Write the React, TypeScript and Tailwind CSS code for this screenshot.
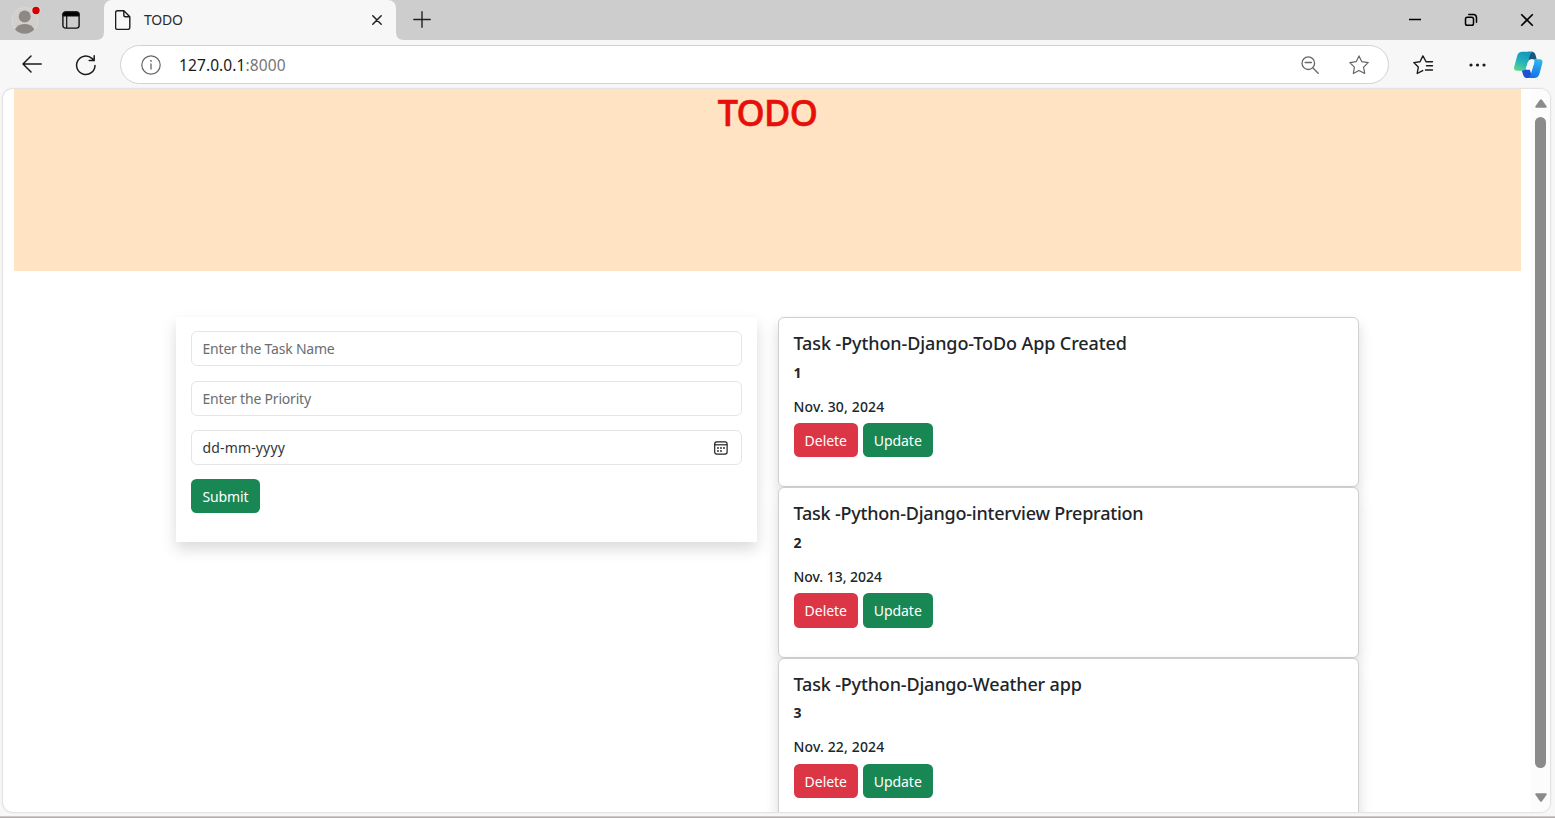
import React from "react";

type Task = { name: string; nameSpacing: string; dateSpacing: string; priority: string; date: string };

const tasks: Task[] = [
  { name: "Task -Python-Django-ToDo App Created", nameSpacing: "tracking-[-0.1px]", dateSpacing: "tracking-[0.15px]", priority: "1", date: "Nov. 30, 2024" },
  { name: "Task -Python-Django-interview Prepration", nameSpacing: "tracking-[-0.21px]", dateSpacing: "tracking-[-0.03px]", priority: "2", date: "Nov. 13, 2024" },
  { name: "Task -Python-Django-Weather app", nameSpacing: "tracking-[-0.16px]", dateSpacing: "tracking-[0.15px]", priority: "3", date: "Nov. 22, 2024" },
];

function TabStrip() {
  return (
    <div className="flex h-[40px] shrink-0 items-stretch bg-[#cdcdcd]">
      <div className="flex w-[104px] shrink-0 items-center">
        <svg className="ml-[11px] h-[34px] w-[32px]" viewBox="0 0 32 34" fill="none">
          <circle cx="14" cy="17.500" r="13" fill="#d2d0ce" stroke="#dcd9d6" />
          <circle cx="13.700" cy="13.500" r="6" fill="#8d8884" />
          <path d="M4 26.200c1.800-3.400 5.600-5.200 9.700-5.200s7.900 1.800 9.600 5.200c-2 2.800-5.600 4.600-9.600 4.600S6 29 4 26.200z" fill="#8d8884" />
          <circle cx="25" cy="7.500" r="4.600" fill="#dedede" />
          <circle cx="25" cy="7.500" r="3.700" fill="#d40000" />
        </svg>
        <svg className="ml-[19px] h-[18px] w-[18px]" viewBox="0 0 18 18" fill="none" stroke="#111">
          <rect x="0.900" y="0.900" width="16.200" height="16.200" rx="2.600" strokeWidth="1.400" />
          <path d="M1 3.200Q1 1 3.400 1h11.200Q17 1 17 3.200V5H1z" fill="#000" />
          <path d="M4.700 5v12" strokeWidth="1.200" />
        </svg>
      </div>
      <div className="relative flex w-[292px] shrink-0 items-center rounded-t-[8px] bg-[#f7f7f7]">
        <svg className="absolute bottom-0 left-[-8px] h-[8px] w-[8px]" viewBox="0 0 8 8"><path d="M8 0v8H0q8 0 8-8z" fill="#f7f7f7" /></svg>
        <svg className="absolute right-[-8px] bottom-0 h-[8px] w-[8px]" viewBox="0 0 8 8"><path d="M0 0v8h8Q0 8 0 0z" fill="#f7f7f7" /></svg>
        <svg className="ml-[11px] h-[20px] w-[16px]" viewBox="0 0 16 20" fill="none" stroke="#1b1b1b" strokeWidth="1.400" strokeLinejoin="round">
          <path d="M2.600.7h6.200l6 6v10.700q0 2-2 2H2.600q-2 0-2-2V2.700q0-2 2-2z" />
          <path d="M8.800.7v4.200q0 1.800 1.800 1.800h4.200" />
        </svg>
        <span className="mb-[1px] ml-[13px] text-[14px] leading-[20px] tracking-[-0.200px] text-[#2b2b2b]">TODO</span>
        <svg className="mr-[14px] ml-auto h-[10px] w-[10px]" viewBox="0 0 10 10" stroke="#222" strokeWidth="1.500" strokeLinecap="round"><path d="M.8.8l8.400 8.400M9.200.8L.8 9.200" /></svg>
      </div>
      <svg className="mt-[11px] ml-[17px] h-[17px] w-[18px]" viewBox="0 0 18 17" stroke="#222" strokeWidth="1.400" strokeLinecap="round"><path d="M9 .7v15.600M.8 8.500h16.400" /></svg>
      <div className="ml-auto flex w-[150px] items-center text-black">
        <svg className="ml-[3px] h-[14px] w-[14px]" viewBox="0 0 14 14" stroke="currentColor" strokeWidth="1.500"><path d="M1 6.500h12" /></svg>
        <svg className="ml-[42px] h-[14px] w-[14px]" viewBox="0 0 14 14" fill="none" stroke="currentColor" strokeWidth="1.500">
          <rect x="1.500" y="4.200" width="8" height="8" rx="1.800" />
          <path d="M4.800 1.500h4.500q3.200 0 3.200 3.200v4.500" strokeLinecap="round" />
        </svg>
        <svg className="ml-[42px] h-[14px] w-[14px]" viewBox="0 0 14 14" stroke="currentColor" strokeWidth="1.600"><path d="M1.200 1.200l11.600 11.600M12.800 1.200L1.200 12.800" /></svg>
      </div>
    </div>
  );
}

function Toolbar() {
  return (
    <div className="flex h-[48px] shrink-0 items-center bg-[#f7f7f7]">
      <svg className="ml-[22px] h-[18px] w-[20px]" viewBox="0 0 20 18" fill="none" stroke="#1b1b1b" strokeWidth="1.500" strokeLinecap="round" strokeLinejoin="round"><path d="M19.300 9H1M9 1L1 9l8 8" /></svg>
      <svg className="mt-[1px] ml-[33px] h-[22px] w-[22px]" viewBox="0 0 22 22" fill="none" stroke="#1b1b1b" strokeWidth="1.500" strokeLinecap="round" strokeLinejoin="round">
        <path d="M20 11.500A9.200 9.200 0 1 1 16.900 4.400L19.200 6.600M19.200 1.700v4.900h-5" />
      </svg>
      <div className="mt-[1px] ml-[23px] flex h-[39px] w-[1269px] items-center rounded-full border border-[#d2d2d2] bg-white">
        <svg className="ml-[20px] h-[20px] w-[20px]" viewBox="0 0 20 20" fill="none" stroke="#666" strokeWidth="1.200">
          <circle cx="10" cy="10" r="9.200" />
          <path d="M10 8.600v6" strokeWidth="1.300" />
          <circle cx="10" cy="5.900" r=".9" fill="#666" stroke="none" />
        </svg>
        <span className="ml-[18px] text-[15.500px] leading-[22px] tracking-[0.100px] text-[#767676]"><span className="text-[#181818]">127.0.0.1</span>:8000</span>
        <svg className="mr-[30px] ml-auto h-[18px] w-[18px]" viewBox="0 0 18 18" fill="none" stroke="#666" strokeWidth="1.300" strokeLinecap="round">
          <circle cx="7.300" cy="7.200" r="6.300" /><path d="M12 12l5.200 5.200M4.200 6.500h6.200" />
        </svg>
        <svg className="mr-[19px] h-[20px] w-[20px]" viewBox="0 0 20 20" fill="none" stroke="#666" strokeWidth="1.200" strokeLinejoin="round">
          <path d="M10 .9l2.800 5.800 6.400.9-4.600 4.500 1.100 6.400L10 15.500l-5.700 3 1.100-6.400L.8 7.600l6.400-.9z" />
        </svg>
      </div>
      <svg className="mt-[1px] ml-[24px] h-[20px] w-[21px]" viewBox="0 0 21 20" fill="none" stroke="#1b1b1b" strokeWidth="1.400" strokeLinejoin="round" strokeLinecap="round">
        <path d="M13 6.500L9.900.9 7 6.700l-6.200.9 4.500 4.500-1.100 6.400 5.500-2.900M13 6.800h6.500M13.500 10.800h6M12.500 15h7" />
      </svg>
      <svg className="mt-[1px] ml-[35px] h-[4px] w-[17px]" viewBox="0 0 17 4" fill="#1b1b1b"><circle cx="2" cy="2" r="1.600" /><circle cx="8.500" cy="2" r="1.600" /><circle cx="15" cy="2" r="1.600" /></svg>
      <svg className="mt-[1px] ml-[27px] h-[28px] w-[31px]" viewBox="0 0 31 28" fill="none">
        <defs>
          <linearGradient id="copilotLeft" x1="12" y1="1" x2="5" y2="20" gradientUnits="userSpaceOnUse"><stop stopColor="#1496bd" /><stop offset=".5" stopColor="#23b3b9" /><stop offset="1" stopColor="#5fd58a" /></linearGradient>
          <linearGradient id="copilotRight" x1="25" y1="8" x2="20" y2="27" gradientUnits="userSpaceOnUse"><stop stopColor="#31b9ee" /><stop offset="1" stopColor="#1271e8" /></linearGradient>
        </defs>
        <path d="M15 .8h4.200q2.300 0 3.100 2.500l1.500 5.200h-5.300q-2.200 0-3.100 2.700z" fill="#15577c" />
        <path d="M7 18h9.600l2 6-2.600 3h-2.200q-2.700 0-3.500-2.700L9 20.200q-.8-2.100-2-2.200z" fill="#2050d3" />
        <path d="M9.300.8H20q-2.200.6-3.100 3.400L13.200 16.600q-.9 3.100-4.200 3.100H4.200Q.2 19.700 1.300 15.600L4.200 4.800Q5.300.8 9.300.8z" fill="url(#copilotLeft)" />
        <path d="M19.500 8.300h6.900q4 0 2.900 4L26.500 22.800q-1.200 4.200-5.500 4.200h-6q2-.7 2.700-3.200l3.600-12.600q.6-2.300-1.800-2.900z" fill="url(#copilotRight)" />
        <path d="M17.600 8.300h2.300q1.800.5 1.200 2.900l-1.200 4.500q-.8 3-3.600 3.100h-3.900q.6-.8.900-1.900l1.800-6q.7-2.200 2.500-2.600z" fill="#f7f7f7" />
      </svg>
    </div>
  );
}

const field = "flex h-[35px] items-center rounded-[6px] border border-[#e2e6e8] bg-white px-[10.500px]";

function TaskForm() {
  return (
    <form className="flex h-[225.500px] w-[581px] flex-col bg-white px-[15px] pt-[14.400px] text-[14px] shadow-[0_7px_14px_rgba(0,0,0,0.15)]">
      <div className={field}><span className="tracking-[-0.200px] text-[#696d71]">Enter the Task Name</span></div>
      <div className={field + " mt-[14.200px]"}><span className="tracking-[-0.200px] text-[#696d71]">Enter the Priority</span></div>
      <div className={field + " mt-[14.200px] justify-between"}>
        <span className="tracking-[0.150px] text-[#33373b]">dd-mm-yyyy</span>
        <svg className="mt-[1px] mr-[3px] h-[14px] w-[14px]" viewBox="0 0 14 14" fill="none" stroke="#222" strokeWidth="1.200">
          <rect x=".7" y=".9" width="12.400" height="12.200" rx="2" /><path d="M.8 3.800h12.400" />
          <g fill="#222" stroke="none"><circle cx="4" cy="7" r=".9" /><circle cx="7" cy="7" r=".9" /><circle cx="10" cy="7" r=".9" /><circle cx="4" cy="10" r=".9" /><circle cx="7" cy="10" r=".9" /></g>
        </svg>
      </div>
      <button type="button" className="mt-[14.300px] h-[34.400px] w-[69px] rounded-[5.500px] bg-[#198754] text-[14px] tracking-[-0.100px] text-white">Submit</button>
    </form>
  );
}

function TaskCard({ task }: { task: Task }) {
  return (
    <article className="h-[170.400px] shrink-0 rounded-[6px] border border-[#cfcfcf] bg-white px-[14.500px] pt-[14px] text-[#212529] shadow-[0_7px_14px_rgba(0,0,0,0.15)]">
      <h5 className={"h-[25px] text-[18px] leading-[23px] font-medium whitespace-nowrap " + task.nameSpacing}>{task.name}</h5>
      <p className="h-[31px] pt-[4.600px] text-[14px] leading-[22px] font-bold">{task.priority}</p>
      <p className={"h-[34.800px] pt-[8.700px] text-[14px] leading-[20px] font-medium " + task.dateSpacing}>{task.date}</p>
      <div className="flex gap-[4.500px] text-[14px] text-white">
        <button type="button" className="h-[34.500px] w-[64.500px] rounded-[5.500px] bg-[#dc3545] pt-[1px] tracking-[-0.050px]">Delete</button>
        <button type="button" className="h-[34.500px] w-[70.500px] rounded-[5.500px] bg-[#198754] pt-[1px] tracking-[-0.050px]">Update</button>
      </div>
    </article>
  );
}

export default function App() {
  return (
    <div className="flex h-[818px] w-[1555px] flex-col overflow-hidden bg-[#f7f7f7] font-['Noto_Sans','Open_Sans',sans-serif]">
      <TabStrip />
      <Toolbar />
      <div className="mt-[1px] ml-[3px] flex h-[723px] w-[1547px] shrink-0 overflow-hidden rounded-[9px] bg-white shadow-[0_0_2px_rgba(0,0,0,0.3)]">
        <main className="flex h-full w-[1528px] flex-col overflow-hidden pl-[11px]">
          <header className="h-[182.400px] w-[1507px] shrink-0 bg-[#ffe3c3] text-center">
            <h1 className="pt-[2px] text-[36px] leading-[43px] font-medium tracking-[-0.700px] text-[#e60f0a] [-webkit-text-stroke:0.6px_#e60f0a]">TODO</h1>
          </header>
          <div className="mt-[45.600px] ml-[162px] flex items-start gap-[21px]">
            <TaskForm />
            <section className="flex w-[581px] flex-col">
              {tasks.map((task) => <TaskCard key={task.priority} task={task} />)}
            </section>
          </div>
        </main>
        <aside className="flex w-[19px] flex-col items-center bg-[#fcfcfc]">
          <svg className="mt-[10px] h-[9px] w-[12px]" viewBox="0 0 12 9" fill="#8b8b8b"><path d="M5 .7q1-1 2 0l4.600 6.600q.5 1.500-.9 1.500H1.300Q-.1 8.800.4 7.300z" /></svg>
          <div className="mt-[9px] h-[651px] w-[11px] rounded-full bg-[#8b8b8b]" />
          <svg className="mt-[25px] h-[9px] w-[12px]" viewBox="0 0 12 9" fill="#8b8b8b"><path d="M5 8.300q1 1 2 0l4.600-6.600Q12.100.2 10.700.2H1.300Q-.1.2.4 1.700z" /></svg>
        </aside>
      </div>
      <div className="mt-auto h-[2px] shrink-0 border-t border-[#cfcaca] bg-[#b3adad]" />
    </div>
  );
}
